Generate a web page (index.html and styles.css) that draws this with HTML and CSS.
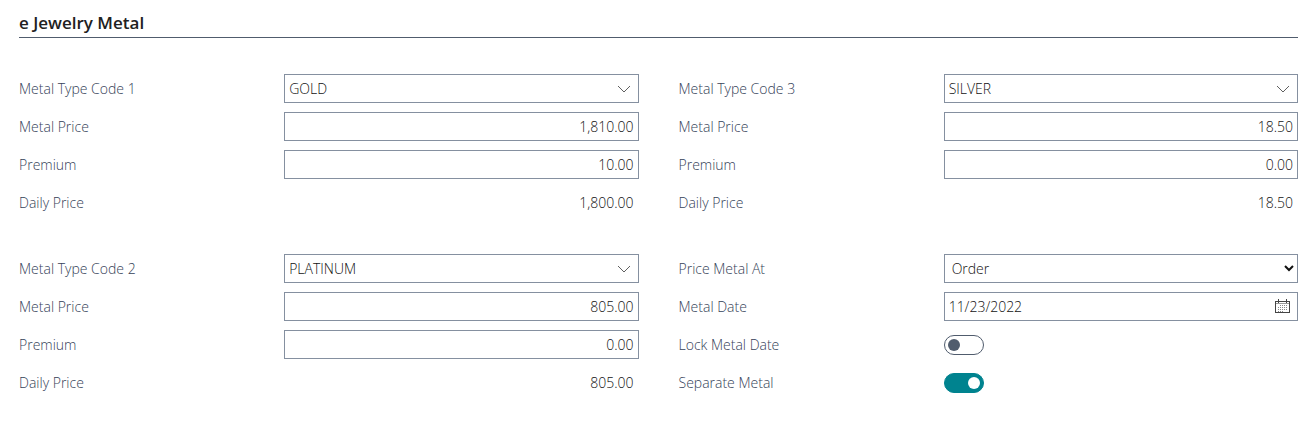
FILE: index.html
```html
<!DOCTYPE html>
<html lang="en">
<head>
	<meta charset="UTF-8">
	<title>e Jewelry Metal</title>
	<link rel="stylesheet" href="styles.css">
</head>
<body>
	<form class="metal">
		<h2 class="title">e Jewelry Metal</h2>

		<div class="columns">
			<!-- metal 1 -->
			<div class="group">
				<div class="row">
					<label for="type1">Metal Type Code 1</label>
					<div class="box">
						<input id="type1" type="text" value="GOLD">
						<button type="button" aria-label="Look up"><svg class="arrow" viewBox="0 0 14 8"><path d="M1 1l6 6 6-6"/></svg></button>
					</div>
				</div>
				<div class="row">
					<label for="price1">Metal Price</label>
					<div class="box"><input id="price1" class="num" type="text" value="1,810.00"></div>
				</div>
				<div class="row">
					<label for="premium1">Premium</label>
					<div class="box"><input id="premium1" class="num" type="text" value="10.00"></div>
				</div>
				<div class="row">
					<label for="daily1">Daily Price</label>
					<output id="daily1" class="num">1,800.00</output>
				</div>
			</div>

			<!-- metal 3 -->
			<div class="group">
				<div class="row">
					<label for="type3">Metal Type Code 3</label>
					<div class="box">
						<input id="type3" type="text" value="SILVER">
						<button type="button" aria-label="Look up"><svg class="arrow" viewBox="0 0 14 8"><path d="M1 1l6 6 6-6"/></svg></button>
					</div>
				</div>
				<div class="row">
					<label for="price3">Metal Price</label>
					<div class="box"><input id="price3" class="num" type="text" value="18.50"></div>
				</div>
				<div class="row">
					<label for="premium3">Premium</label>
					<div class="box"><input id="premium3" class="num" type="text" value="0.00"></div>
				</div>
				<div class="row">
					<label for="daily3">Daily Price</label>
					<output id="daily3" class="num">18.50</output>
				</div>
			</div>

			<!-- metal 2 -->
			<div class="group">
				<div class="row">
					<label for="type2">Metal Type Code 2</label>
					<div class="box">
						<input id="type2" type="text" value="PLATINUM">
						<button type="button" aria-label="Look up"><svg class="arrow" viewBox="0 0 14 8"><path d="M1 1l6 6 6-6"/></svg></button>
					</div>
				</div>
				<div class="row">
					<label for="price2">Metal Price</label>
					<div class="box"><input id="price2" class="num" type="text" value="805.00"></div>
				</div>
				<div class="row">
					<label for="premium2">Premium</label>
					<div class="box"><input id="premium2" class="num" type="text" value="0.00"></div>
				</div>
				<div class="row">
					<label for="daily2">Daily Price</label>
					<output id="daily2" class="num">805.00</output>
				</div>
			</div>

			<!-- options -->
			<div class="group">
				<div class="row">
					<label for="priceAt">Price Metal At</label>
					<select id="priceAt" class="select">
						<option>Order</option>
					</select>
				</div>
				<div class="row">
					<label for="date">Metal Date</label>
					<div class="box">
						<input id="date" type="text" value="11/23/2022">
						<button type="button" aria-label="Open calendar">
							<svg class="calendar" viewBox="0 0 16 15" shape-rendering="crispEdges">
								<path class="frame" d="M.5 2.5h14v11H.5zM3.5 0v4M11.5 0v4"/>
								<path class="bar" d="M1 4.5h13"/>
								<path class="days" d="M5 6.5h8M3 8.5h10M3 10.5h10M3 12.5h6"/>
							</svg>
						</button>
					</div>
				</div>
				<div class="row">
					<label for="lock">Lock Metal Date</label>
					<input id="lock" class="switch" type="checkbox">
				</div>
				<div class="row">
					<label for="separate">Separate Metal</label>
					<input id="separate" class="switch" type="checkbox" checked>
				</div>
			</div>
		</div>
	</form>
</body>
</html>
```
FILE: styles.css
```css
* {
    box-sizing: border-box;
}
body {
    margin: 0;
    background: #fff;
    color: #111;
    font: 300 14px/20px "Segoe UI", "Open Sans", sans-serif;
}
.metal {
    padding: 9px 13px 32px 19px;
}
.title {
    margin: 0 0 36px;
    border-bottom: 1px solid #505c6d;
    color: #212121;
    font-size: 17px;
    line-height: 28px;
    font-weight: 600;
}
.columns {
    display: grid;
    grid-template-columns: 1fr 1fr;
    gap: 37px 40px;
}
.group {
    display: grid;
    gap: 9px;
}
.row {
    display: grid;
    grid-template-columns: 42.8% 1fr;
    align-items: center;
    height: 29px;
}
label {
    color: #354258;
}
.box {
    display: flex;
    align-items: center;
    height: 29px;
    border: 1px solid #8590a0;
}
.box input {
    flex: 1;
    min-width: 0;
    padding: 0 4px;
    border: 0;
    outline: 0;
    background: none;
    color: inherit;
    font: inherit;
}
.box button {
    display: flex;
    justify-content: center;
    width: 28px;
    padding: 0;
    border: 0;
    background: none;
}
.num {
    text-align: right;
}
output {
    padding-right: 5px;
}
.select {
    width: 100%;
    height: 29px;
    padding: 0 0 0 3px;
    border: 1px solid #8590a0;
    border-radius: 0;
    background: #fff;
    color: inherit;
    font: inherit;
}
/* icons */
.arrow {
    width: 14px;
    height: 8px;
    fill: none;
    stroke: #606060;
}
.calendar {
    width: 16px;
    height: 15px;
    fill: none;
}
.frame {
    stroke: #444;
}
.bar {
    stroke: #999;
}
.days {
    stroke: #888;
    stroke-dasharray: 1 1;
}
/* on/off switch */
.switch {
    appearance: none;
    display: flex;
    align-items: center;
    width: 40px;
    height: 20px;
    margin: 0;
    padding: 0 3px;
    border: 1px solid #505c6d;
    border-radius: 10px;
}
.switch::before {
    content: '';
    width: 12px;
    height: 12px;
    border-radius: 50%;
    background: #505c6d;
}
.switch:checked {
    justify-content: flex-end;
    border-color: #00838f;
    background: #00838f;
}
.switch:checked::before {
    background: #fff;
}
```
